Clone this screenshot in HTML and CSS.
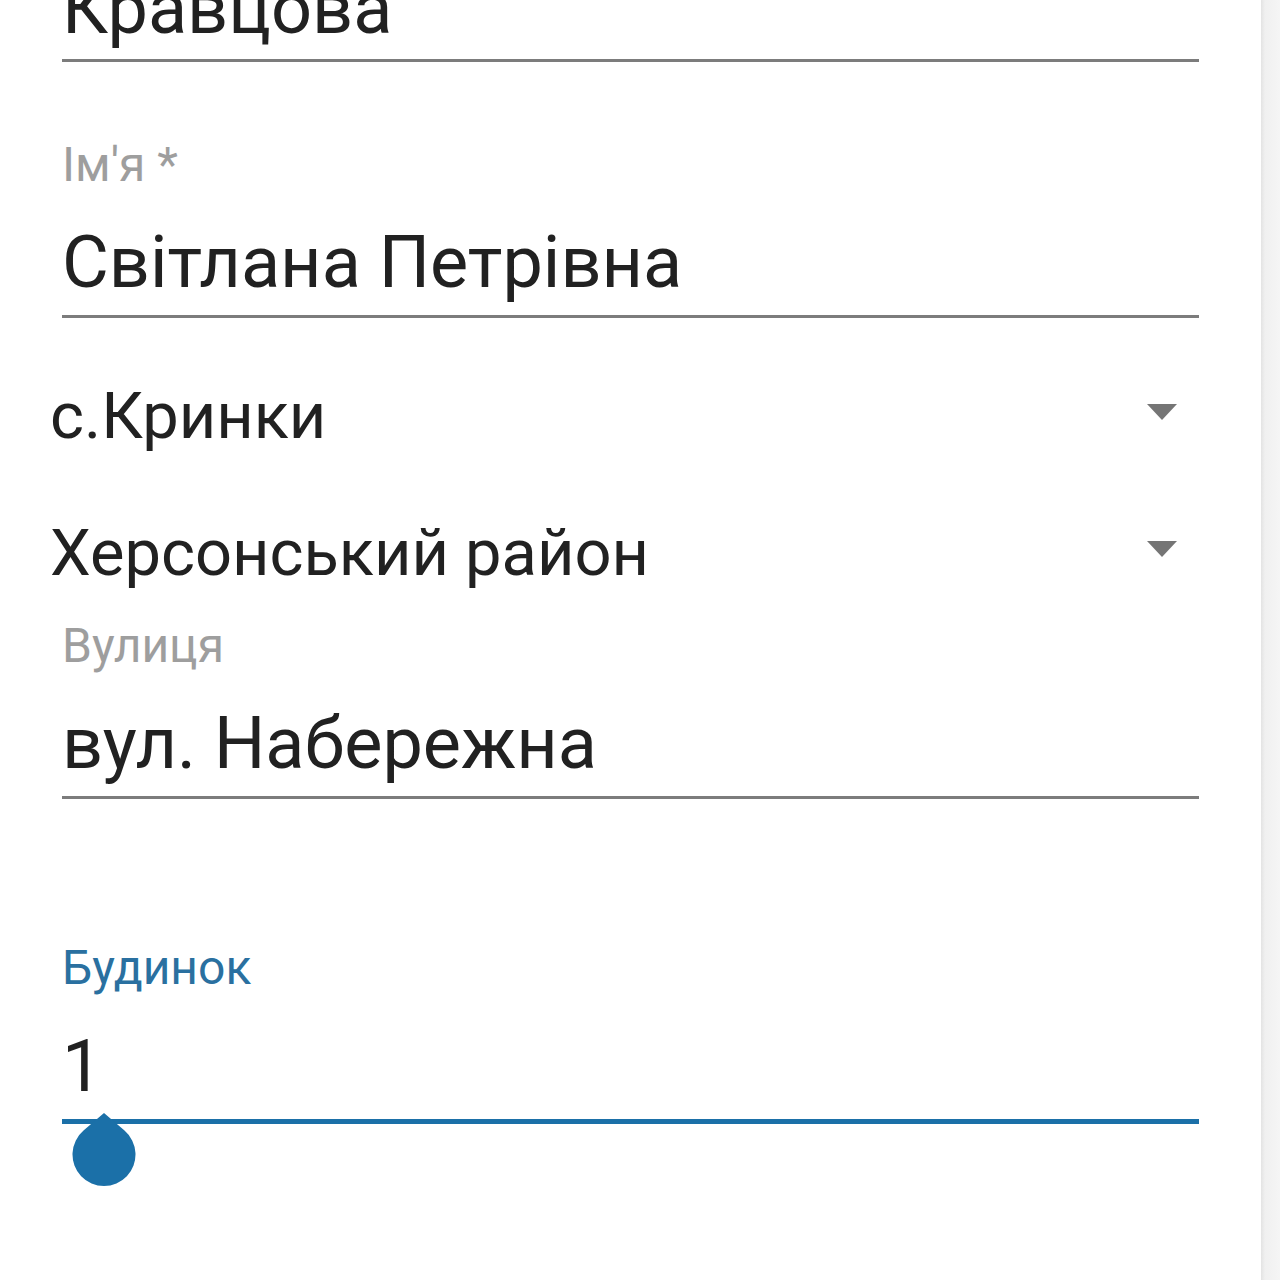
FILE: index.html
```html
<!DOCTYPE html>
<html lang="uk">
<head>
<meta charset="utf-8">
<link rel="stylesheet" href="styles.css">
</head>
<body>
<div class="screen">
  <main class="form">
    <div class="field">
      <div class="value first">Кравцова</div>
    </div>
    <div class="field">
      <div class="label lbl-name">Ім'я *</div>
      <div class="value v-name">Світлана Петрівна</div>
    </div>
    <div class="spinner sp-1">
      <span class="sp-text">с.Кринки</span>
      <span class="caret"></span>
    </div>
    <div class="spinner sp-2">
      <span class="sp-text">Херсонський район</span>
      <span class="caret"></span>
    </div>
    <div class="field">
      <div class="label lbl-street">Вулиця</div>
      <div class="value v-street">вул. Набережна</div>
    </div>
    <div class="field">
      <div class="label active lbl-house">Будинок</div>
      <div class="value focused v-house">1
        <svg class="handle" width="64" height="75" viewBox="0 0 64 75"><path d="M32 0 L52.5 17.6 A31.5 31.5 0 1 1 11.5 17.6 Z" fill="#1b70a8"/></svg>
      </div>
    </div>
  </main>
  <div class="edge"></div>
</div>
</body>
</html>
```
FILE: styles.css
```css
html, body {
  margin: 0;
  padding: 0;
  background: #ffffff;
}
body {
  font-family: Roboto, "Noto Sans", sans-serif;
  color: #212121;
}
.screen {
  display: flex;
  width: 1280px;
  height: 1280px;
  overflow: hidden;
}
.form {
  width: 1137px;
  padding: 0 62px 0 62px;
  display: flex;
  flex-direction: column;
  background: #ffffff;
}
.edge {
  width: 19px;
  flex: none;
  background: linear-gradient(to right, #e3e3e3, #f0f0f0 4px, #f5f5f5);
}
.field {
  display: flex;
  flex-direction: column;
}
.label {
  font-size: 48px;
  line-height: 48px;
  color: #9e9e9e;
}
.label.active {
  color: #2a70a0;
}
.value {
  font-size: 72px;
  line-height: 70px;
  padding-bottom: 17px;
  border-bottom: 3px solid #7c7c7c;
  position: relative;
}
.value.first {
  margin-top: -26px;
  padding-bottom: 15px;
}
.lbl-name { margin-top: 79px; }
.v-name { margin-top: 39px; }
.spinner {
  display: flex;
  align-items: center;
  margin-left: -12px;
  font-size: 65px;
  line-height: 64px;
}
.sp-text { flex: 1; }
.sp-1 { margin-top: 66px; }
.sp-2 { margin-top: 73px; }
.caret {
  width: 0;
  height: 0;
  border-left: 15px solid transparent;
  border-right: 15px solid transparent;
  border-top: 16px solid #757575;
  margin-right: 22px;
  margin-top: -8px;
}
.lbl-street { margin-top: 37px; }
.v-street { margin-top: 39px; }
.lbl-house { margin-top: 145px; }
.v-house { margin-top: 40px; padding-bottom: 17px; }
.value.focused {
  border-bottom: 5px solid #1b70a8;
}
.handle {
  position: absolute;
  left: 9.5px;
  top: calc(100% - 6px);
}
```
